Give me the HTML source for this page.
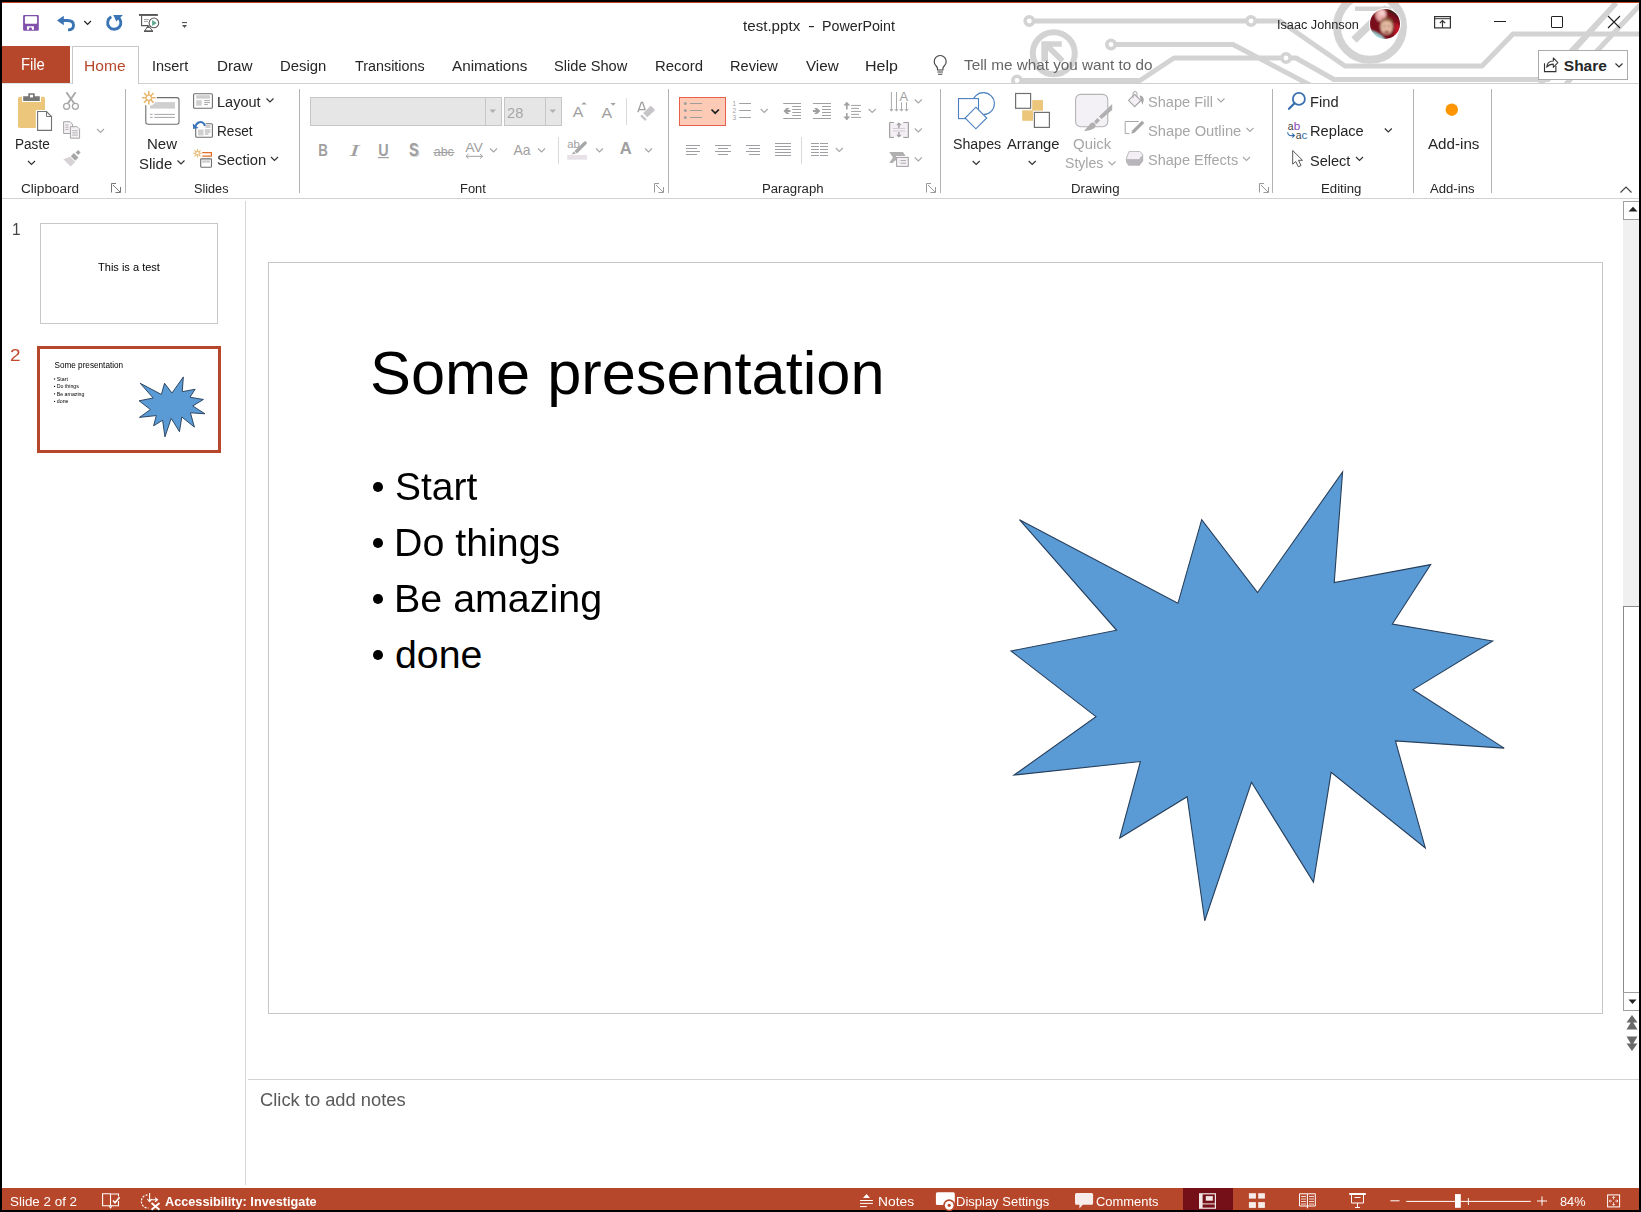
<!DOCTYPE html>
<html><head><meta charset="utf-8"><style>
html,body{margin:0;padding:0;}
body{width:1641px;height:1212px;position:relative;overflow:hidden;background:#000;font-family:"Liberation Sans",sans-serif;}
.t{position:absolute;white-space:pre;transform-origin:0 0;font-family:"Liberation Sans",sans-serif;}
.a{position:absolute;}
svg{position:absolute;overflow:visible;}
</style></head><body>
<div class="a" style="left:2px;top:2px;width:1637px;height:1208px;background:#fff"></div>
<div class="a" style="left:2px;top:2px;width:1637px;height:1px;background:#c4461f"></div>
<!-- File tab -->
<div class="a" style="left:2px;top:46px;width:68px;height:37px;background:#b7472a"></div>
<!-- tab row bottom line -->
<div class="a" style="left:2px;top:83px;width:70px;height:1px;background:#dde3e6"></div>
<div class="a" style="left:138px;top:83px;width:1501px;height:1px;background:#d0d0d0"></div>
<!-- Home tab -->
<div class="a" style="left:72px;top:46px;width:65px;height:37px;border:1px solid #c8c8c8;border-bottom:none;background:#fff"></div>
<!-- ribbon bottom line -->
<div class="a" style="left:2px;top:198px;width:1637px;height:1px;background:#d2d2d2"></div>
<!-- left panel separator -->
<div class="a" style="left:245px;top:201px;width:1px;height:984px;background:#d6d6d6"></div>
<!-- slide -->
<div class="a" style="left:268px;top:262px;width:1333px;height:750px;border:1px solid #c6c6c6;background:#fff"></div>
<!-- notes separator -->
<div class="a" style="left:248px;top:1079px;width:1391px;height:1px;background:#d2d2d2"></div>
<!-- scrollbar -->
<div class="a" style="left:1623px;top:201px;width:16px;height:810px;background:#f0f0f0"></div>
<div class="a" style="left:1623px;top:201px;width:15px;height:17px;border:1px solid #a0a0a0;border-right:none;background:#fff"></div>
<svg style="left:1628px;top:206px" width="10" height="6" viewBox="0 0 10 6"><path d="M0.5,5.5 L5,0.8 L9.5,5.5 Z" fill="#222"/></svg>
<div class="a" style="left:1623px;top:606px;width:15px;height:385px;border:1px solid #8a8a8a;border-right:none;background:#fff"></div>
<div class="a" style="left:1623px;top:992px;width:15px;height:17px;border:1px solid #a0a0a0;border-right:none;background:#fff"></div>
<svg style="left:1628px;top:999px" width="9" height="6" viewBox="0 0 9 6"><path d="M0.5,0.5 L4.5,5 L8.5,0.5 Z" fill="#222"/></svg>
<svg style="left:1626px;top:1014px" width="12" height="16" viewBox="0 0 12 16"><path d="M6,1 L11.5,8.5 H0.5 Z M6,6.5 L11.5,15.5 H0.5 Z" fill="#6a6a6a"/></svg>
<svg style="left:1626px;top:1036px" width="12" height="16" viewBox="0 0 12 16"><path d="M6,15 L11.5,7.5 H0.5 Z M6,9.5 L11.5,0.5 H0.5 Z" fill="#6a6a6a"/></svg>
<!-- status bar -->
<div class="a" style="left:2px;top:1188px;width:1637px;height:22px;background:#b7472a"></div>
<div class="a" style="left:1183px;top:1188px;width:50px;height:22px;background:#751019"></div>
<!-- thumbnails -->
<div class="a" style="left:40px;top:223px;width:176px;height:99px;border:1px solid #c8c8c8;background:#fff"></div>
<div class="a" style="left:37px;top:346px;width:178px;height:101px;border:3px solid #b7472a;background:#fff"></div>
<svg style="left:0;top:0" width="1641" height="84" viewBox="0 0 1641 84">
<defs><clipPath id="cc"><rect x="2" y="3" width="1637" height="80"/></clipPath></defs>
<g clip-path="url(#cc)" fill="none" stroke="#d3d3d3" stroke-width="5" stroke-linejoin="round">
<path d="M1033,21 H1247 M1255,21 H1280 L1345,66 H1482 L1513,34 H1645"/>
<path d="M1115,44.5 H1233 L1310,85"/>
<path d="M1021,80.5 H1140 L1174,58 H1282 M1290,58 H1296 L1334,79.5 H1548 L1616,3"/>
<path d="M1616,3 L1530,95 M1640,5 L1553,98"/>
<circle cx="1053.8" cy="53.2" r="21" stroke-width="6"/>
<circle cx="1370" cy="26.8" r="33" stroke-width="8"/>
<path d="M1387,8 L1354,40" stroke-width="7.5"/>
</g>
<g clip-path="url(#cc)" fill="#d3d3d3">
<path d="M1041.3,41.3 H1061.8 V46.8 H1052.3 L1064.6,59 L1060.6,63 L1048,50.4 V61.4 H1041.3 Z"/>
<path d="M1355,6.5 H1391.5 V36 H1386.5 V11 H1355 Z"/>
</g>
<g clip-path="url(#cc)" fill="#fff" stroke="#d3d3d3" stroke-width="3.5">
<circle cx="1029.3" cy="21" r="4.2"/>
<circle cx="1251" cy="21" r="4.2"/>
<circle cx="1111" cy="44.5" r="4.2"/>
<circle cx="1017" cy="80.5" r="4.2"/>
<circle cx="1286" cy="58" r="4.2"/>
</g>
</svg>
<svg style="left:1011.2px;top:471.9px" width="493.2" height="448.8" viewBox="0 0 21600 21600" preserveAspectRatio="none"><path d="M10800,5800 L14522,0 L14155,5325 L18380,4457 L16702,7315 L21097,8137 L17607,10475 L21600,13290 L16837,12942 L18145,18095 L14020,14457 L13247,19737 L10532,14935 L8485,21600 L7715,15627 L4762,17617 L5667,13937 L135,14587 L3722,11775 L0,8615 L4627,7617 L370,2295 L7312,6320 L8352,2295 Z" fill="#5b9bd5" stroke="#263f5c" stroke-width="1.1" vector-effect="non-scaling-stroke"/></svg>
<div class="a" style="left:372.7px;top:482px;width:9.9px;height:9.9px;border-radius:50%;background:#000"></div>
<div class="a" style="left:372.7px;top:538px;width:9.9px;height:9.9px;border-radius:50%;background:#000"></div>
<div class="a" style="left:372.7px;top:594px;width:9.9px;height:9.9px;border-radius:50%;background:#000"></div>
<div class="a" style="left:372.7px;top:650px;width:9.9px;height:9.9px;border-radius:50%;background:#000"></div>
<!-- QAT: save -->
<svg style="left:0;top:0" width="130" height="40" viewBox="0 0 130 40">
<rect x="23.1" y="15" width="15.7" height="15.8" rx="1" fill="#8150aa"/>
<rect x="24.9" y="16.2" width="12.2" height="7.6" rx="0.8" fill="#fff"/>
<path d="M26.9,29.8 V26.2 H33.9 V29.8 H31.9 V28.6 Q31.9,27.6 30.9,27.6 H30 Q29,27.6 29,28.6 V29.8 Z" fill="#fff"/>
<path d="M57,20.5 L63.8,15.8 V25.2 Z" fill="#3b74b5"/>
<path d="M62,20.5 H67.5 Q73.5,20.5 73.5,25.2 Q73.5,29.9 68,29.9" fill="none" stroke="#3b74b5" stroke-width="2.9"/>
<path d="M84.3,21 L87.6,24.3 L90.9,21" fill="none" stroke="#222" stroke-width="1.2"/>
<path d="M111.3,16.8 A6.6,6.6 0 1 0 117.4,16.9" fill="none" stroke="#3b74b5" stroke-width="2.9"/>
<path d="M113.3,14.9 H122.9 L116.3,21.6 Z" fill="#3b74b5"/>
</svg>
<!-- from beginning -->
<svg style="left:0;top:0" width="200" height="40" viewBox="0 0 200 40">
<rect x="139" y="14" width="18.9" height="1.9" fill="#555"/>
<path d="M141.6,15.9 V25.6 H148.2" fill="none" stroke="#555" stroke-width="1.1"/>
<path d="M144,19.5 H148.8 M144,21.4 H147.8" stroke="#8a8a8a" stroke-width="0.8"/>
<path d="M148.3,25.6 L144.6,31 H152.6 Z" fill="#fff" stroke="#555" stroke-width="1"/>
<rect x="144" y="30.6" width="9" height="1.4" fill="#555"/>
<path d="M148.3,25.4 L146.7,28 H149.9 Z" fill="#555"/>
<circle cx="153.9" cy="22.9" r="4.8" fill="#fff" stroke="#555" stroke-width="1.05"/>
<path d="M152.2,20 L156.8,22.9 L152.2,25.9 Z" fill="#5ba88a"/>
<rect x="182" y="22" width="5" height="1.1" fill="#555"/>
<path d="M182,25 H187 L184.5,27.9 Z" fill="#555"/>
</svg>
<!-- avatar -->
<svg style="left:1368px;top:7px" width="34" height="34" viewBox="1368 7 34 34">
<defs><clipPath id="av"><circle cx="1385" cy="23.9" r="15"/></clipPath><filter id="avb" x="-20%" y="-20%" width="140%" height="140%"><feGaussianBlur stdDeviation="0.9"/></filter></defs>
<circle cx="1385" cy="23.9" r="16" fill="#fff"/>
<g clip-path="url(#av)"><g filter="url(#avb)">
<rect x="1368" y="7" width="34" height="34" fill="#7a0f1a"/>
<path d="M1388,7 H1402 V22 Q1396,14 1388,12 Z" fill="#3a1a14"/>
<ellipse cx="1381" cy="15" rx="5.5" ry="6.5" fill="#e8a8a8"/>
<ellipse cx="1382" cy="13" rx="3" ry="3" fill="#f4d0cc"/>
<path d="M1395,22 Q1402,26 1400,36 L1394,40 Z" fill="#c0182a"/>
<path d="M1368,30 Q1374,31 1382,36 L1386,41 H1368 Z" fill="#9fd4d8"/>
<ellipse cx="1386.6" cy="26.5" rx="6.2" ry="8" fill="#e4b9a2"/>
<path d="M1380.2,24 Q1381,17.5 1386.6,17.5 Q1392.5,17.5 1393,24 Q1390,20.5 1386.6,20.5 Q1383,20.5 1380.2,24 Z" fill="#8a5a3a"/>
<ellipse cx="1386.6" cy="32" rx="2.3" ry="1.2" fill="#7a3030"/>
<circle cx="1384.3" cy="26.3" r="0.8" fill="#4a2a20"/><circle cx="1389" cy="26.3" r="0.8" fill="#4a2a20"/>
</g></g>
</svg>
<!-- ribbon display options -->
<svg style="left:1434px;top:16px" width="17" height="13" viewBox="0 0 17 13"><rect x="0.6" y="0.6" width="15.8" height="11.3" fill="none" stroke="#333" stroke-width="1.2"/><path d="M1,2.7 H16" stroke="#333" stroke-width="1"/><path d="M8.5,11.8 V4.6 M5.8,7.2 L8.5,4.5 L11.2,7.2" fill="none" stroke="#333" stroke-width="1.2"/></svg>
<!-- minimize -->
<div class="a" style="left:1494px;top:21px;width:12px;height:1px;background:#222"></div>
<!-- maximize -->
<div class="a" style="left:1551px;top:16px;width:10px;height:10px;border:1px solid #222;border-radius:1px"></div>
<!-- close -->
<svg style="left:1607px;top:15px" width="14" height="14" viewBox="0 0 14 14"><path d="M1,1 L13,13 M13,1 L1,13" stroke="#222" stroke-width="1.15"/></svg>
<!-- share button -->
<div class="a" style="left:1538px;top:50px;width:88px;height:28px;border:1px solid #ababab;background:#fff"></div>
<svg style="left:0;top:0" width="1641" height="84" viewBox="0 0 1641 84"><path d="M1544.5,63.2 V71.6 H1555.9 V66" fill="none" stroke="#333" stroke-width="1.1"/><path d="M1546.6,67.2 Q1547.2,61 1553.3,61 V57.9 L1557.9,62.6 L1553.3,67.3 V64.1 Q1549.3,64.1 1546.6,67.2 Z" fill="#fff" stroke="#333" stroke-width="1.05" stroke-linejoin="round"/></svg>
<svg style="left:1615px;top:63px" width="8" height="5" viewBox="0 0 8 5"><path d="M0.5,0.5 L4,4 L7.5,0.5" fill="none" stroke="#333" stroke-width="1.2"/></svg>
<!-- bulb -->
<svg style="left:0;top:0" width="960" height="84" viewBox="0 0 960 84"><path d="M937.5,70 V68.6 Q937.5,67.4 936.2,66 A6,6 0 1 1 944.2,66 Q942.9,67.4 942.9,68.6 V70 Z" fill="none" stroke="#444" stroke-width="1.15" stroke-linejoin="round"/><path d="M937.4,72 H943 M938,74.2 H942.4" stroke="#444" stroke-width="1.15"/></svg>
<svg style="left:0;top:0" width="1641" height="200" viewBox="0 0 1641 200">
<!-- separators -->
<g fill="#b4b4b4">
<rect x="125" y="89" width="1" height="104"/>
<rect x="299" y="89" width="1" height="104"/>
<rect x="668" y="89" width="1" height="104"/>
<rect x="940" y="89" width="1" height="104"/>
<rect x="1272" y="89" width="1" height="104"/>
<rect x="1413" y="89" width="1" height="104"/>
<rect x="1491" y="89" width="1" height="104"/>
</g>
<!-- dialog launchers -->
<g fill="none" stroke="#777" stroke-width="1">
<path d="M111.5,192.5 V183.5 H116 M113,185 L120,192 M120.5,187 V192.5 H115.5"/>
<path d="M654.5,192.5 V183.5 H659 M656,185 L663,192 M663.5,187 V192.5 H658.5" stroke="#999"/>
<path d="M926.5,192.5 V183.5 H931 M928,185 L935,192 M935.5,187 V192.5 H930.5" stroke="#999"/>
<path d="M1259.5,192.5 V183.5 H1264 M1261,185 L1268,192 M1268.5,187 V192.5 H1263.5" stroke="#999"/>
</g>
<!-- chevrons dark -->
<g fill="none" stroke="#333" stroke-width="1.2">
<path d="M28,161 L31.5,164.5 L35,161"/>
<path d="M177.5,160.5 L181,164 L184.5,160.5"/>
<path d="M266.5,98.5 L270,102 L273.5,98.5"/>
<path d="M271,157 L274.5,160.5 L278,157"/>
<path d="M972.7,161 L976.2,164.5 L979.7,161"/>
<path d="M1028.7,161 L1032.2,164.5 L1035.7,161"/>
<path d="M1384.8,128.5 L1388.3,132 L1391.8,128.5"/>
<path d="M1356,157 L1359.5,160.5 L1363,157"/>
<path d="M1620.5,192.5 L1626,187 L1631.5,192.5" stroke="#444"/>
</g>
<!-- chevrons light -->
<g fill="none" stroke="#a6a6a6" stroke-width="1.1">
<path d="M97,129 L100.5,132.5 L104,129"/>
<path d="M490,148.5 L493.5,152 L497,148.5"/>
<path d="M538,148.5 L541.5,152 L545,148.5"/>
<path d="M596,148.5 L599.5,152 L603,148.5"/>
<path d="M645,148.5 L648.5,152 L652,148.5"/>
<path d="M760.7,109 L764.2,112.5 L767.7,109"/>
<path d="M868.7,109 L872.2,112.5 L875.7,109"/>
<path d="M914.8,99.5 L918.3,103 L921.8,99.5"/>
<path d="M914.8,128.5 L918.3,132 L921.8,128.5"/>
<path d="M914.8,157.5 L918.3,161 L921.8,157.5"/>
<path d="M835.8,148 L839.3,151.5 L842.8,148"/>
<path d="M1108.5,161.5 L1112,165 L1115.5,161.5"/>
<path d="M1217.5,98.5 L1221,102 L1224.5,98.5"/>
<path d="M1246.5,128 L1250,131.5 L1253.5,128"/>
<path d="M1243,157 L1246.5,160.5 L1250,157"/>
</g>
<!-- Paste -->
<rect x="18" y="96.8" width="27" height="31.2" rx="1.8" fill="#ecc67b"/>
<rect x="22" y="94" width="19" height="8" fill="#fff"/>
<path d="M23.2,96.2 H28.3 V93.2 H34.7 V96.2 H39.8 V101 H23.2 Z" fill="#777"/>
<rect x="30" y="94.8" width="3" height="2.6" fill="#fff"/>
<rect x="35.8" y="110" width="17.5" height="22" fill="#fff"/>
<path d="M37.6,111.5 H46.5 L51.5,116.5 V130.4 H37.6 Z" fill="#fff" stroke="#727272" stroke-width="1.1"/>
<path d="M46.5,111.5 V116.5 H51.5" fill="none" stroke="#727272" stroke-width="1"/>
<!-- Scissors -->
<g fill="none" stroke="#a6a6a6" stroke-width="1.3">
<circle cx="66.6" cy="106.3" r="3"/>
<circle cx="75.4" cy="106.3" r="3"/>
<path d="M67.8,103.5 L75.6,92.3 M74.2,103.5 L66.4,92.3" stroke-width="1.8"/>
</g>
<!-- Copy -->
<g stroke="#a6a6a6" stroke-width="1">
<path d="M63.6,121.7 H70 L72.5,124.2 V133.5 H63.6 Z" fill="#f4f0f4"/>
<path d="M70.4,126.7 H77.2 L79.6,129.1 V138.2 H70.4 Z" fill="#f4f0f4"/>
<path d="M65.3,125 H68.5 M65.3,127.2 H68.5 M65.3,129.4 H68.5 M72.2,130.7 H77.8 M72.2,132.9 H77.8 M72.2,135.1 H77.8" stroke-width="0.8"/>
</g>
<!-- Format painter -->
<path d="M63.3,159.2 L70,156.8 L75.3,162.1 L70.6,166.4 Z" fill="#d6d2d6"/>
<path d="M70.8,156.2 L73.9,153.1 L78.4,157.6 L75.3,160.7 Z" fill="#a6a6a6"/>
<path d="M75.6,152.6 L78.1,150.1 L80.6,152.6 L78.1,155.1 Z" fill="#a6a6a6"/>
<!-- New slide -->
<rect x="145.8" y="97.6" width="33.2" height="26.6" rx="2.2" fill="#fff" stroke="#6e6e6e" stroke-width="1.1"/>
<rect x="150" y="102.1" width="25" height="6.5" fill="#cfcfcf"/>
<path d="M150,114.4 H152.6 M154.3,114.4 H174.9 M150,117.4 H152.6 M154.3,117.4 H174.9" stroke="#8e8e8e" stroke-width="0.8"/>
<circle cx="148.8" cy="97.8" r="8" fill="#fff"/>
<g stroke="#e8b870" stroke-width="1.6">
<path d="M148.8,91 V104.6 M142,97.8 H155.6 M144,93 L153.6,102.6 M153.6,93 L144,102.6"/>
</g>
<circle cx="148.8" cy="97.8" r="3.4" fill="#e8b870"/>
<circle cx="148.8" cy="97.8" r="2" fill="#fff"/>
<!-- Layout -->
<rect x="193.6" y="93.8" width="18.8" height="14.4" rx="1" fill="#fff" stroke="#6e6e6e" stroke-width="1.1"/>
<rect x="196.2" y="95.2" width="13.7" height="3.5" fill="#cfcfcf"/>
<rect x="196.2" y="100.2" width="5.5" height="5.5" fill="#cfcfcf"/>
<path d="M204.2,100.6 H209.9 M204.2,102.6 H209.9 M204.2,104.6 H207.9" stroke="#8e8e8e" stroke-width="0.8"/>
<!-- Reset -->
<rect x="195.7" y="123.7" width="16.7" height="13.6" rx="1" fill="#fff" stroke="#6e6e6e" stroke-width="1.1"/>
<rect x="201.5" y="125" width="9" height="3" fill="#cfcfcf"/>
<rect x="198" y="129.5" width="5.5" height="6" fill="#cfcfcf"/>
<path d="M204.8,130 H210.5 M204.8,132 H210.5 M204.8,134 H208.5" stroke="#8e8e8e" stroke-width="0.8"/>
<rect x="192" y="119" width="13.5" height="9" fill="#fff"/>
<path d="M205,126 Q203,120.5 198.5,122.5 Q196.5,123.5 195.5,126" fill="none" stroke="#3b74b8" stroke-width="2"/>
<path d="M192.8,123.5 L193.2,129 L198.6,128 Z" fill="#3b74b8"/>
<!-- Section -->
<path d="M202.3,152.6 H211.4 V156.2 H202.3" fill="none" stroke="#e46c26" stroke-width="1.2"/>
<rect x="200.7" y="158.9" width="10.8" height="8.3" rx="0.6" fill="#fff" stroke="#6e6e6e" stroke-width="1.1"/>
<rect x="202.2" y="160.3" width="7.8" height="2.4" fill="#cfcfcf"/>
<g stroke="#e8b870" stroke-width="1.1">
<path d="M197.5,149 V157.6 M193.2,153.3 H201.8 M194.5,150.3 L200.5,156.3 M200.5,150.3 L194.5,156.3"/>
</g>
<circle cx="197.5" cy="153.3" r="2.2" fill="#e8b870"/>
<circle cx="197.5" cy="153.3" r="1.2" fill="#fff"/>
</svg>
<svg style="left:0;top:0" width="1641" height="200" viewBox="0 0 1641 200">
<!-- font boxes -->
<rect x="310.5" y="97.5" width="191" height="28" fill="#e6e6e6" stroke="#c6c6c6" stroke-width="1"/>
<rect x="485" y="98" width="1" height="27" fill="#c6c6c6"/>
<path d="M489.5,109.5 H496 L492.75,113 Z" fill="#b0b0b0"/>
<rect x="504.5" y="97.5" width="57" height="28" fill="#e6e6e6" stroke="#c6c6c6" stroke-width="1"/>
<rect x="545" y="98" width="1" height="27" fill="#c6c6c6"/>
<path d="M549.5,109.5 H556 L552.75,113 Z" fill="#b0b0b0"/>
<!-- grow / shrink -->
<g fill="#a0a0a0">
<text x="572.8" y="116.8" font-family="Liberation Sans" font-size="15" textLength="10.6" lengthAdjust="spacingAndGlyphs">A</text>
<path d="M581.4,104.6 L584,102 L586.7,104.6 Z"/>
<text x="601.5" y="117.7" font-family="Liberation Sans" font-size="15" textLength="10.6" lengthAdjust="spacingAndGlyphs">A</text>
<path d="M610.5,103 H615.7 L613.1,105.8 Z"/>
</g>
<rect x="626" y="98" width="1" height="27" fill="#dadada"/>
<!-- clear formatting -->
<path d="M637.9,112.2 L641.3,102.4 H642.5 L645.2,109.8 M639.2,109.6 H645.4" fill="none" stroke="#9c9c9c" stroke-width="1.3"/>
<path d="M643.1,113.1 L650.3,106.3 Q651,105.7 651.7,106.4 L654.6,109.5 Q655.2,110.2 654.5,110.8 L647.3,117.3 Z" fill="#c6c4c8"/>
<path d="M640.2,116.3 L641.9,114.6 L646.8,119.2 L645.1,120.9 Z" fill="#c6c4c8"/>
<!-- B I U S abc -->
<text x="318.2" y="156" font-family="Liberation Sans" font-weight="bold" font-size="17" fill="#a0a0a0" textLength="9.6" lengthAdjust="spacingAndGlyphs">B</text>
<text x="349.5" y="156" font-family="Liberation Serif" font-style="italic" font-size="17.5" fill="#a0a0a0" textLength="9.8" lengthAdjust="spacingAndGlyphs">I</text>
<text x="378.2" y="156" font-family="Liberation Sans" font-weight="bold" font-size="17" fill="#a0a0a0" textLength="10.4" lengthAdjust="spacingAndGlyphs">U</text>
<rect x="378" y="157" width="11" height="1.2" fill="#a0a0a0"/>
<text x="410.2" y="156.8" font-family="Liberation Sans" font-weight="bold" font-size="18" fill="#d6d6d6" textLength="9.6" lengthAdjust="spacingAndGlyphs">S</text>
<text x="409" y="155.8" font-family="Liberation Sans" font-weight="bold" font-size="18" fill="#a0a0a0" textLength="9.6" lengthAdjust="spacingAndGlyphs">S</text>
<text x="433.8" y="155.5" font-family="Liberation Sans" font-size="13" fill="#a0a0a0" textLength="20" lengthAdjust="spacingAndGlyphs">abc</text>
<rect x="433.5" y="152" width="21" height="1.1" fill="#a0a0a0"/>
<!-- AV -->
<text x="465.3" y="151.8" font-family="Liberation Sans" font-size="13.5" fill="#a0a0a0" textLength="17.6" lengthAdjust="spacingAndGlyphs">AV</text>
<path d="M466,156.3 H482.5 M468.5,154 L466,156.3 L468.5,158.6 M480,154 L482.5,156.3 L480,158.6" fill="none" stroke="#a0a0a0" stroke-width="1"/>
<!-- Aa -->
<text x="513.5" y="155" font-family="Liberation Sans" font-size="15" fill="#a0a0a0" textLength="17" lengthAdjust="spacingAndGlyphs">Aa</text>
<rect x="558" y="137" width="1" height="27" fill="#dadada"/>
<!-- highlighter -->
<text x="567.3" y="148" font-family="Liberation Sans" font-size="11" fill="#a0a0a0" textLength="12.6" lengthAdjust="spacingAndGlyphs">ab</text>
<path d="M571.5,154.5 L574,151.5 L576,153.5 Z M574.5,151 L584.2,141.6 Q585.2,140.8 586,141.6 L586.6,142.3 Q587.3,143 586.5,143.9 L577,153.4 Z" fill="#a8a8a8"/>
<rect x="567.2" y="155" width="19.8" height="4.7" fill="#e8e2e8"/>
<!-- font color -->
<text x="619.8" y="153.8" font-family="Liberation Sans" font-weight="bold" font-size="16.5" fill="#a0a0a0" textLength="12" lengthAdjust="spacingAndGlyphs">A</text>

<!-- Paragraph: bullets -->
<rect x="679.5" y="97.5" width="46" height="28" fill="#fccab5" stroke="#e8604c" stroke-width="1"/>
<g fill="#a0a0a0"><circle cx="685.3" cy="103.5" r="1.5"/><circle cx="685.3" cy="110.5" r="1.5"/><circle cx="685.3" cy="117.5" r="1.5"/></g>
<path d="M690,103.5 H702 M690,110.5 H702 M690,117.5 H702" stroke="#a0a0a0" stroke-width="1"/>
<path d="M711.5,109.5 L715.2,113.2 L718.9,109.5" fill="none" stroke-width="1.7" stroke="#222"/>
<!-- numbering -->
<text x="732.5" y="106" font-family="Liberation Sans" font-size="6.5" fill="#a0a0a0">1</text>
<text x="732.5" y="113" font-family="Liberation Sans" font-size="6.5" fill="#a0a0a0">2</text>
<text x="732.5" y="120" font-family="Liberation Sans" font-size="6.5" fill="#a0a0a0">3</text>
<path d="M739.2,103.5 H751 M739.2,110.5 H751 M739.2,117.5 H751" stroke="#a0a0a0" stroke-width="1"/>
<!-- decrease indent -->
<path d="M783.2,103.5 H801 M783.2,118.5 H801 M792.3,106.5 H801 M792.3,109.5 H801 M792.3,112.5 H801 M792.3,115.5 H801" stroke="#a0a0a0" stroke-width="1"/>
<path d="M790.5,110 H787.5 L789.5,108 H786.5 L783.5,111 L786.5,114 H789.5 L787.5,112 H790.5 Z" fill="#a0a0a0"/>
<!-- increase indent -->
<path d="M812.9,103.5 H831 M812.9,118.5 H831 M822,106.5 H831 M822,109.5 H831 M822,112.5 H831 M822,115.5 H831" stroke="#a0a0a0" stroke-width="1"/>
<path d="M812.9,110 H816 L814,108 H817 L820.5,111 L817,114 H814 L816,112 H812.9 Z" fill="#a0a0a0"/>
<!-- line spacing -->
<path d="M846.8,103 V109.5 M846.8,113 V119.5" stroke="#a0a0a0" stroke-width="1.6"/>
<path d="M843.3,105.5 L846.8,101.8 L850.3,105.5 Z M843.3,116.5 L846.8,120.2 L850.3,116.5 Z" fill="#a0a0a0"/>
<path d="M851.1,105.4 H861 M851.1,108.4 H859 M851.1,111.4 H861 M851.1,114.4 H859 M851.1,117.4 H861" stroke="#a0a0a0" stroke-width="1"/>
<!-- text direction -->
<path d="M891.4,92 V110.5 M896.5,92 V110.5 M901.5,102.3 V110.5 M906.5,102.3 V110.5" stroke="#a0a0a0" stroke-width="0.9"/>
<path d="M889.8,109 L891.4,111.2 L893,109 M894.9,109 L896.5,111.2 L898.1,109 M899.9,109 L901.5,111.2 L903.1,109 M904.9,109 L906.5,111.2 L908.1,109" fill="none" stroke="#a0a0a0" stroke-width="0.9"/>
<text x="899.6" y="100.7" font-family="Liberation Sans" font-size="13" fill="#a0a0a0" textLength="8.6" lengthAdjust="spacingAndGlyphs">A</text>
<!-- align text -->
<path d="M894,122.5 H889.7 V137.4 H894 M903.5,122.5 H908.3 V137.4 H903.5" fill="#f4eff4" stroke="#a0a0a0" stroke-width="1"/>
<rect x="890.3" y="123" width="17.5" height="14" fill="#f4eff4"/>
<path d="M889.7,122.5 V137.4 M908.3,122.5 V137.4 M889.7,122.5 H894 M903.5,122.5 H908.3 M889.7,137.4 H894 M903.5,137.4 H908.3" fill="none" stroke="#a0a0a0" stroke-width="1"/>
<path d="M898.9,124 V128 M898.9,132 V136" stroke="#a0a0a0" stroke-width="1.4"/>
<path d="M896.3,125.3 L898.9,122.3 L901.5,125.3 Z M896.3,134.7 L898.9,137.7 L901.5,134.7 Z" fill="#a0a0a0"/>
<path d="M893,128.5 H905 M893,131 H905" stroke="#c8c4c8" stroke-width="0.8"/>
<!-- smartart -->
<path d="M889.2,152 H903 L905.5,156 H896 V160 L892.5,163 H889.2 L893,157.5 Z" fill="#b0b0b0"/>
<rect x="896.6" y="157.4" width="11.7" height="9" fill="#f4eff4" stroke="#a0a0a0" stroke-width="1"/>
<path d="M900.5,160.5 H906 M900.5,163.2 H906" stroke="#a0a0a0" stroke-width="0.8"/>
<!-- align L C R J -->
<path d="M686,145.5 H700 M686,148.5 H697 M686,151.5 H700 M686,154.5 H697" stroke="#a09ea2" stroke-width="1"/>
<path d="M715,145.5 H731 M718,148.5 H728 M715,151.5 H731 M718,154.5 H728" stroke="#a09ea2" stroke-width="1"/>
<path d="M746,145.5 H760 M749,148.5 H760 M746,151.5 H760 M749,154.5 H760" stroke="#a09ea2" stroke-width="1"/>
<path d="M775,143.5 H791 M775,146.5 H791 M775,149.5 H791 M775,152.5 H791 M775,155.5 H791" stroke="#a09ea2" stroke-width="1"/>
<rect x="801" y="137" width="1" height="27" fill="#dadada"/>
<!-- columns -->
<path d="M811,143.5 H819 M811,146.5 H819 M811,149.5 H819 M811,152.5 H819 M811,155.5 H819 M820,143.5 H828 M820,146.5 H828 M820,149.5 H828 M820,152.5 H828 M820,155.5 H828" stroke="#a09ea2" stroke-width="1"/>

<!-- Drawing: shapes -->
<circle cx="983.4" cy="103.6" r="11" fill="none" stroke="#4a80c0" stroke-width="1.1"/>
<rect x="958.5" y="98.6" width="20" height="20" fill="#fff" stroke="#4a80c0" stroke-width="1.1"/>
<path d="M975.9,107.2 L986.7,118 L975.9,128.8 L965.1,118 Z" fill="#fff" stroke="#4a80c0" stroke-width="1.1"/>
<!-- arrange -->
<rect x="1015.6" y="93.5" width="15" height="14.8" fill="#fff" stroke="#707070" stroke-width="1.2"/>
<rect x="1032.2" y="100.1" width="10.8" height="10.6" fill="#ecc67b"/>
<rect x="1022.2" y="110.3" width="10.8" height="10.5" fill="#ecc67b"/>
<rect x="1034.4" y="112.4" width="15" height="15" fill="#fff" stroke="#707070" stroke-width="1.2"/>
<!-- quick styles -->
<rect x="1075.6" y="94.4" width="32.2" height="32.3" rx="5" fill="#f4f1f6" stroke="#b4b4b4" stroke-width="1.1"/>
<path d="M1084,131 L1090.5,123.5 Q1093,121.5 1095,123.5 Q1096.5,125.5 1094.5,128 Q1090,131.5 1084,131 Z" fill="#b0b0b0"/>
<path d="M1094,121.5 L1097.5,118 L1100,120.5 L1096.5,124 Z" fill="#b0b0b0"/>
<path d="M1099,116.5 L1112.2,104 V110 L1101.5,119 Z" fill="#b0b0b0"/>
<!-- shape fill -->
<path d="M1128.5,100.3 L1134.5,94.3 L1140.8,100.5 L1134.7,106.7 Z" fill="#f4f0f6" stroke="#a6a6a6" stroke-width="1.1"/>
<path d="M1133,98 V93.5 Q1133,91.5 1135,91.5 Q1137,91.5 1137,93.5 V97" fill="none" stroke="#a6a6a6" stroke-width="1"/>
<path d="M1139.5,95.5 Q1143.5,95.5 1143.8,100 L1142.3,105 L1141,100.5 Z" fill="#a6a6a6"/>
<!-- shape outline -->
<path d="M1138.7,121.5 H1125.2 V133.6 H1129.5" fill="none" stroke="#a6a6a6" stroke-width="1"/>
<path d="M1131.2,133.8 L1132.2,130.5 L1142,120.8 L1144.3,123 L1134.5,132.8 Z" fill="#a6a6a6"/>
<!-- shape effects -->
<path d="M1129,151.5 H1140 L1143.2,155 V161 L1139.5,165.7 H1128.5 L1126,162 V158.5 Z" fill="#b8b6ba"/>
<path d="M1129,151.5 H1140 L1143,155 L1139,159.5 H1126 Z" fill="#f2eef4" stroke="#b8b6ba" stroke-width="0.8"/>
<!-- find -->
<circle cx="1298.9" cy="98.9" r="6" fill="none" stroke="#3a6fb0" stroke-width="1.8"/>
<path d="M1294.5,103.3 L1289,108.8" stroke="#3a6fb0" stroke-width="2.3" stroke-linecap="round"/>
<!-- replace -->
<text x="1287.8" y="129.8" font-family="Liberation Sans" font-size="11" fill="#444" textLength="5.8" lengthAdjust="spacingAndGlyphs">a</text>
<text x="1293.7" y="129.8" font-family="Liberation Sans" font-size="11" fill="#8a4bb8" textLength="6.5" lengthAdjust="spacingAndGlyphs">b</text>
<text x="1295.8" y="139" font-family="Liberation Sans" font-size="11" fill="#444" textLength="5.8" lengthAdjust="spacingAndGlyphs">a</text>
<text x="1301.5" y="139" font-family="Liberation Sans" font-size="11" fill="#3a6fb0" textLength="5.8" lengthAdjust="spacingAndGlyphs">c</text>
<path d="M1287.6,132.2 Q1288,135.6 1291.5,135.6 H1294.3 M1292.3,133.5 L1294.5,135.6 L1292.3,137.7" fill="none" stroke="#3a6fb0" stroke-width="1.1"/>
<!-- select -->
<path d="M1292.7,150.5 L1302.5,160.3 H1298.5 L1301,165.5 L1298.3,166.8 L1295.8,161.5 L1292.7,164.2 Z" fill="#fff" stroke="#555" stroke-width="1"/>
<!-- add-ins -->
<circle cx="1451.8" cy="109.7" r="6.2" fill="#ff9500"/>
</svg>
<svg style="left:0;top:1180px" width="1641" height="32" viewBox="0 1180 1641 32">
<g fill="none" stroke="#fff" stroke-width="1.1">
<!-- spell check -->
<path d="M110.5,1194 V1205.8 H102.6 V1193.8 H110.5 M110.5,1194 H118.5 V1196.5 M118.5,1201 V1205.8 H110.5"/>
<path d="M109,1206 L110.5,1207.8 L112,1206"/>
<path d="M113,1200.5 L115,1202.8 L119.6,1197.2" stroke-width="1.6"/>
<!-- accessibility -->
<path d="M147.5,1194.8 A6.6,6.6 0 1 0 148.5,1208" stroke-dasharray="2,1.3" stroke-width="1.2"/>
<path d="M149.6,1193 V1200.5 M147.3,1199 L149.6,1201.6 L151.9,1199 M150.2,1199.7 H156.7 M155,1197.6 L157.6,1199.7 L155,1201.8"/>
<path d="M151.5,1203 L159.5,1209.8 M159.5,1203 L151.5,1209.8" stroke-width="1.8"/>
<!-- notes -->
<path d="M860,1200.5 H872.9 M860,1203.4 H872.9 M860,1206.6 H866.8" stroke-width="1"/>
<!-- slider -->
<path d="M1390.4,1200.8 H1399.5 M1406.2,1201.4 H1530.8 M1468.4,1198 V1205 M1537,1201 H1547 M1542,1196.4 V1205.6" stroke-width="1"/>
<!-- fit -->
<rect x="1607.6" y="1194.9" width="12" height="12" stroke-width="1"/>
<path d="M1613.6,1196.5 V1199.5 M1613.6,1202.3 V1205.3 M1609.3,1201 H1612 M1615.2,1201 H1618 M1612.4,1197.8 L1613.6,1196.5 L1614.8,1197.8 M1612.4,1204 L1613.6,1205.3 L1614.8,1204 M1610.6,1199.8 L1609.3,1201 L1610.6,1202.2 M1616.6,1199.8 L1618,1201 L1616.6,1202.2" stroke-width="0.8"/>
<!-- reading view -->
<path d="M1299.5,1193.8 H1307.4 V1206 H1299.5 Z M1307.4,1193.8 H1315.3 V1206 H1307.4 M1307.4,1206 V1208.3" stroke-width="1"/>
<path d="M1301,1196.5 H1306 M1301,1199 H1306 M1301,1201.5 H1306 M1301,1204 H1306 M1309,1196.5 H1314 M1309,1199 H1314 M1309,1201.5 H1314 M1309,1204 H1314" stroke-width="0.8"/>
<!-- slide show -->
<path d="M1351.5,1194.5 V1203 H1363.5 V1194.5 M1357.5,1203 V1207.7 M1355,1207.5 H1360 M1354.5,1197.5 H1360.5" stroke-width="1"/>
</g>
<g fill="#fff">
<path d="M863,1198 L866.5,1194 L870,1198 Z"/>
<rect x="1349.2" y="1193" width="16.6" height="2"/>
<rect x="1455" y="1194.1" width="5.8" height="13.7"/>
<!-- display settings -->
<rect x="935.9" y="1192.2" width="18.9" height="12.8" rx="1.5"/>
<circle cx="949.2" cy="1205.3" r="6" fill="#b7472a"/>
<circle cx="949.2" cy="1205.3" r="4.4"/>
<circle cx="949.2" cy="1205.3" r="1.6" fill="#b7472a"/>
<!-- comments -->
<path d="M1076.5,1193 H1091.6 Q1093.1,1193 1093.1,1194.5 V1203.3 Q1093.1,1204.8 1091.6,1204.8 H1082.8 L1079.4,1208.4 V1204.8 H1076.5 Q1075,1204.8 1075,1203.3 V1194.5 Q1075,1193 1076.5,1193 Z" fill="#f7ecea"/>
<!-- sorter -->
<rect x="1248.9" y="1193.2" width="7" height="5.4" fill="#f7ecea"/>
<rect x="1258.2" y="1193.2" width="6.7" height="5.4" fill="#f7ecea"/>
<rect x="1248.9" y="1202.1" width="7" height="5.8" fill="#f7ecea"/>
<rect x="1258.2" y="1202.1" width="6.7" height="5.8" fill="#f7ecea"/>
</g>
<!-- normal view -->
<rect x="1199" y="1193.2" width="17" height="15.6" fill="#f2e6e6"/>
<rect x="1202.6" y="1194.4" width="12.2" height="9" fill="#751019"/>
<rect x="1202.6" y="1204.4" width="12.2" height="3.2" fill="#751019"/>
<rect x="1205.8" y="1196.1" width="7" height="4.6" fill="#f2e6e6"/>
</svg>

<span class="t" style="left:743.20px;top:19.00px;font-size:14.5px;line-height:14.5px;color:#262626;font-weight:400;transform:scaleX(1.0444);">test.pptx</span>
<span class="t" style="left:807.57px;top:19.00px;font-size:14.5px;line-height:14.5px;color:#262626;font-weight:400;transform:scaleX(1.4333);">-</span>
<span class="t" style="left:821.72px;top:19.00px;font-size:14.5px;line-height:14.5px;color:#262626;font-weight:400;transform:scaleX(0.9836);">PowerPoint</span>
<span class="t" style="left:1277.38px;top:19.00px;font-size:12.5px;line-height:12.5px;color:#262626;font-weight:400;transform:scaleX(1.0152);">Isaac Johnson</span>
<span class="t" style="left:20.88px;top:57.00px;font-size:16px;line-height:16px;color:#ffffff;font-weight:400;transform:scaleX(0.9250);">File</span>
<span class="t" style="left:83.70px;top:58.00px;font-size:15.5px;line-height:15.5px;color:#b7472a;font-weight:400;transform:scaleX(1.0050);">Home</span>
<span class="t" style="left:152.27px;top:58.00px;font-size:15.5px;line-height:15.5px;color:#262626;font-weight:400;transform:scaleX(0.9342);">Insert</span>
<span class="t" style="left:216.62px;top:58.00px;font-size:15.5px;line-height:15.5px;color:#262626;font-weight:400;transform:scaleX(0.9829);">Draw</span>
<span class="t" style="left:279.64px;top:58.00px;font-size:15.5px;line-height:15.5px;color:#262626;font-weight:400;transform:scaleX(0.9596);">Design</span>
<span class="t" style="left:354.60px;top:58.00px;font-size:15.5px;line-height:15.5px;color:#262626;font-weight:400;transform:scaleX(0.9253);">Transitions</span>
<span class="t" style="left:452.20px;top:58.00px;font-size:15.5px;line-height:15.5px;color:#262626;font-weight:400;transform:scaleX(0.9842);">Animations</span>
<span class="t" style="left:554.25px;top:58.00px;font-size:15.5px;line-height:15.5px;color:#262626;font-weight:400;transform:scaleX(0.9455);">Slide Show</span>
<span class="t" style="left:655.34px;top:58.00px;font-size:15.5px;line-height:15.5px;color:#262626;font-weight:400;transform:scaleX(0.9604);">Record</span>
<span class="t" style="left:730.06px;top:58.00px;font-size:15.5px;line-height:15.5px;color:#262626;font-weight:400;transform:scaleX(0.9400);">Review</span>
<span class="t" style="left:806.00px;top:58.00px;font-size:15.5px;line-height:15.5px;color:#262626;font-weight:400;transform:scaleX(0.9788);">View</span>
<span class="t" style="left:865.17px;top:58.00px;font-size:15.5px;line-height:15.5px;color:#262626;font-weight:400;transform:scaleX(1.0333);">Help</span>
<span class="t" style="left:964.00px;top:57.00px;font-size:15px;line-height:15px;color:#666666;font-weight:400;transform:scaleX(1.0184);">Tell me what you want to do</span>
<span class="t" style="left:1563.80px;top:58.00px;font-size:15.5px;line-height:15.5px;color:#262626;font-weight:700;">Share</span>
<span class="t" style="left:14.72px;top:136.00px;font-size:15.5px;line-height:15.5px;color:#262626;font-weight:400;transform:scaleX(0.8763);">Paste</span>
<span class="t" style="left:20.51px;top:183.00px;font-size:12.5px;line-height:12.5px;color:#262626;font-weight:400;transform:scaleX(1.0865);">Clipboard</span>
<span class="t" style="left:146.53px;top:136.00px;font-size:15.5px;line-height:15.5px;color:#262626;font-weight:400;transform:scaleX(0.9667);">New</span>
<span class="t" style="left:138.84px;top:156.00px;font-size:15.5px;line-height:15.5px;color:#262626;font-weight:400;transform:scaleX(0.9636);">Slide</span>
<span class="t" style="left:216.96px;top:94.00px;font-size:15.5px;line-height:15.5px;color:#262626;font-weight:400;transform:scaleX(0.9370);">Layout</span>
<span class="t" style="left:216.82px;top:123.00px;font-size:15.5px;line-height:15.5px;color:#262626;font-weight:400;transform:scaleX(0.8775);">Reset</span>
<span class="t" style="left:216.75px;top:152.00px;font-size:15.5px;line-height:15.5px;color:#262626;font-weight:400;transform:scaleX(0.9540);">Section</span>
<span class="t" style="left:194.19px;top:183.00px;font-size:12.5px;line-height:12.5px;color:#262626;font-weight:400;transform:scaleX(1.0121);">Slides</span>
<span class="t" style="left:460.27px;top:183.00px;font-size:12.5px;line-height:12.5px;color:#262626;font-weight:400;transform:scaleX(1.0333);">Font</span>
<span class="t" style="left:506.62px;top:105.00px;font-size:15px;line-height:15px;color:#a6a6a6;font-weight:400;transform:scaleX(0.9800);">28</span>
<span class="t" style="left:762.45px;top:183.00px;font-size:12.5px;line-height:12.5px;color:#262626;font-weight:400;transform:scaleX(1.0544);">Paragraph</span>
<span class="t" style="left:953.08px;top:136.00px;font-size:15.5px;line-height:15.5px;color:#262626;font-weight:400;transform:scaleX(0.9157);">Shapes</span>
<span class="t" style="left:1007.30px;top:136.00px;font-size:15.5px;line-height:15.5px;color:#262626;font-weight:400;transform:scaleX(0.9527);">Arrange</span>
<span class="t" style="left:1072.63px;top:136.00px;font-size:15.5px;line-height:15.5px;color:#a6a6a6;font-weight:400;transform:scaleX(0.9658);">Quick</span>
<span class="t" style="left:1065.39px;top:155.00px;font-size:15.5px;line-height:15.5px;color:#a6a6a6;font-weight:400;transform:scaleX(0.9098);">Styles</span>
<span class="t" style="left:1148.36px;top:94.00px;font-size:15.5px;line-height:15.5px;color:#a6a6a6;font-weight:400;transform:scaleX(0.9418);">Shape Fill</span>
<span class="t" style="left:1148.35px;top:123.00px;font-size:15.5px;line-height:15.5px;color:#a6a6a6;font-weight:400;transform:scaleX(0.9495);">Shape Outline</span>
<span class="t" style="left:1148.36px;top:152.00px;font-size:15.5px;line-height:15.5px;color:#a6a6a6;font-weight:400;transform:scaleX(0.9368);">Shape Effects</span>
<span class="t" style="left:1071.44px;top:183.00px;font-size:12.5px;line-height:12.5px;color:#262626;font-weight:400;transform:scaleX(1.0591);">Drawing</span>
<span class="t" style="left:1310.45px;top:94.00px;font-size:15.5px;line-height:15.5px;color:#262626;font-weight:400;transform:scaleX(0.9464);">Find</span>
<span class="t" style="left:1310.45px;top:123.00px;font-size:15.5px;line-height:15.5px;color:#262626;font-weight:400;transform:scaleX(0.9455);">Replace</span>
<span class="t" style="left:1310.46px;top:153.00px;font-size:15.5px;line-height:15.5px;color:#262626;font-weight:400;transform:scaleX(0.9381);">Select</span>
<span class="t" style="left:1321.44px;top:183.00px;font-size:12.5px;line-height:12.5px;color:#262626;font-weight:400;transform:scaleX(1.0568);">Editing</span>
<span class="t" style="left:1427.70px;top:136.00px;font-size:15.5px;line-height:15.5px;color:#262626;font-weight:400;transform:scaleX(0.9788);">Add-ins</span>
<span class="t" style="left:1429.50px;top:183.00px;font-size:12.5px;line-height:12.5px;color:#262626;font-weight:400;transform:scaleX(1.0500);">Add-ins</span>
<span class="t" style="left:11.56px;top:221.00px;font-size:16.5px;line-height:16.5px;color:#444444;font-weight:400;transform:scaleX(0.9375);">1</span>
<span class="t" style="left:10.39px;top:347.00px;font-size:17px;line-height:17px;color:#c0492b;font-weight:400;transform:scaleX(1.1125);">2</span>
<span class="t" style="left:98.00px;top:262.00px;font-size:11.4px;line-height:11.4px;color:#000000;font-weight:400;transform:scaleX(0.9688);">This is a test</span>
<span class="t" style="left:259.55px;top:1092.00px;font-size:17.5px;line-height:17.5px;color:#595959;font-weight:400;transform:scaleX(1.0471);">Click to add notes</span>
<span class="t" style="left:10.03px;top:1196.00px;font-size:12.5px;line-height:12.5px;color:#ffffff;font-weight:400;transform:scaleX(1.0721);">Slide 2 of 2</span>
<span class="t" style="left:164.60px;top:1196.00px;font-size:12.5px;line-height:12.5px;color:#ffffff;font-weight:700;transform:scaleX(1.0154);">Accessibility: Investigate</span>
<span class="t" style="left:877.90px;top:1196.00px;font-size:12.5px;line-height:12.5px;color:#ffffff;font-weight:400;transform:scaleX(1.1032);">Notes</span>
<span class="t" style="left:955.96px;top:1196.00px;font-size:12.5px;line-height:12.5px;color:#ffffff;font-weight:400;transform:scaleX(1.0398);">Display Settings</span>
<span class="t" style="left:1095.57px;top:1196.00px;font-size:12.5px;line-height:12.5px;color:#ffffff;font-weight:400;transform:scaleX(1.0339);">Comments</span>
<span class="t" style="left:1560.48px;top:1196.00px;font-size:12.5px;line-height:12.5px;color:#ffffff;font-weight:400;transform:scaleX(1.0208);">84%</span>
<span class="t" style="left:370.21px;top:342.00px;font-size:61.5px;line-height:61.5px;color:#000000;font-weight:400;transform:scaleX(0.9967);">Some presentation</span>
<span class="t" style="left:395.21px;top:467.00px;font-size:39.3px;line-height:39.3px;color:#000000;font-weight:400;transform:scaleX(0.9926);">Start</span>
<span class="t" style="left:394.00px;top:523.00px;font-size:39.3px;line-height:39.3px;color:#000000;font-weight:400;transform:scaleX(1.0012);">Do things</span>
<span class="t" style="left:393.99px;top:579.00px;font-size:39.3px;line-height:39.3px;color:#000000;font-weight:400;transform:scaleX(1.0025);">Be amazing</span>
<span class="t" style="left:395.00px;top:635.00px;font-size:39.3px;line-height:39.3px;color:#000000;font-weight:400;">done</span>
<div class="a" style="left:40px;top:349px;width:1333px;height:750px;transform:scale(0.13353);transform-origin:0 0;">
<span class="t" style="left:108.21px;top:87.00px;font-size:61.5px;line-height:61.5px;color:#000000;font-weight:400;transform:scaleX(0.9967);">Some presentation</span><span class="t" style="left:126.21px;top:205.00px;font-size:39.3px;line-height:39.3px;color:#000000;font-weight:400;transform:scaleX(0.9926);">Start</span>
<span class="t" style="left:125.00px;top:261.00px;font-size:39.3px;line-height:39.3px;color:#000000;font-weight:400;transform:scaleX(1.0012);">Do things</span>
<span class="t" style="left:124.99px;top:317.00px;font-size:39.3px;line-height:39.3px;color:#000000;font-weight:400;transform:scaleX(1.0025);">Be amazing</span>
<span class="t" style="left:126.00px;top:373.00px;font-size:39.3px;line-height:39.3px;color:#000000;font-weight:400;">done</span><svg style="left:742.2px;top:208.89999999999998px" width="493.2" height="448.8" viewBox="0 0 21600 21600" preserveAspectRatio="none"><path d="M10800,5800 L14522,0 L14155,5325 L18380,4457 L16702,7315 L21097,8137 L17607,10475 L21600,13290 L16837,12942 L18145,18095 L14020,14457 L13247,19737 L10532,14935 L8485,21600 L7715,15627 L4762,17617 L5667,13937 L135,14587 L3722,11775 L0,8615 L4627,7617 L370,2295 L7312,6320 L8352,2295 Z" fill="#5b9bd5" stroke="#263f5c" stroke-width="7" vector-effect="non-scaling-stroke"/></svg><div class="a" style="left:103.69999999999999px;top:219px;width:9.9px;height:9.9px;border-radius:50%;background:#000"></div><div class="a" style="left:103.69999999999999px;top:275px;width:9.9px;height:9.9px;border-radius:50%;background:#000"></div><div class="a" style="left:103.69999999999999px;top:331px;width:9.9px;height:9.9px;border-radius:50%;background:#000"></div><div class="a" style="left:103.69999999999999px;top:387px;width:9.9px;height:9.9px;border-radius:50%;background:#000"></div>
</div>
</body></html>
